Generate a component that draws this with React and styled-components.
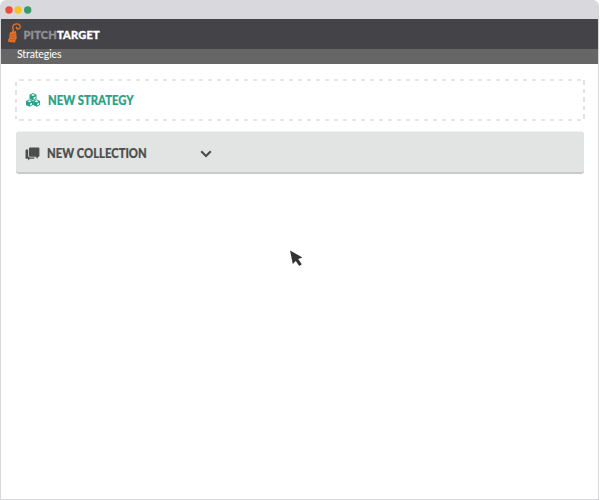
import React from 'react';
import styled, { createGlobalStyle } from 'styled-components';

const GlobalStyle = createGlobalStyle`
  * { box-sizing: border-box; }
  body { margin: 0; background: #fff; font-family: Lato, "Liberation Sans", sans-serif; }
`;

const Window = styled.div`
  position: relative;
  width: 599px;
  height: 500px;
  overflow: hidden;
  display: flex;
  flex-direction: column;
  border: 1px solid #d8d8dc;
  border-top: 0;
  border-radius: 6px 6px 0 0;
  background: #fff;
`;

const TitleBar = styled.div`
  display: flex;
  align-items: center;
  flex: 0 0 19px;
  padding-left: 4px;
  background: #d8d8dd;
`;

const Lights = styled.svg`
  display: block;
`;

const Header = styled.header`
  display: flex;
  align-items: center;
  flex: 0 0 30px;
  padding-left: 6px;
  background: #444348;
`;

const Wordmark = styled.div`
  margin: 1px 0 0 1.5px;
  font: 900 11px/14px Lato, sans-serif;
  letter-spacing: 0.22px;
  color: #fff;
  -webkit-text-stroke: 0.35px currentColor;
`;

const Muted = styled.span`
  color: #929294;
`;

const SubBar = styled.nav`
  flex: 0 0 15px;
  padding-left: 16px;
  background: #666;
  color: #fff;
  font-size: 10.5px;
  line-height: 11px;
  letter-spacing: -0.1px;
`;

const Main = styled.main`
  display: flex;
  flex-direction: column;
  gap: 10px;
  padding: 15px 14px 0 14px;
`;

const Row = styled.div`
  display: flex;
  align-items: center;
  font-weight: 900;
  font-size: 12.6px;
  line-height: 16px;
`;

const StrategyRow = styled(Row)`
  height: 42px;
  width: 570px;
  padding-left: 11px;
  color: #2aa287;
  background:
    repeating-linear-gradient(90deg, #e6e6e6 0 4.5px, transparent 4.5px 9px) 4px 0 / 563px 2px no-repeat,
    repeating-linear-gradient(90deg, #e6e6e6 0 4.5px, transparent 4.5px 9px) 4px 40px / 563px 2px no-repeat,
    repeating-linear-gradient(180deg, #e2e2e2 0 4.5px, transparent 4.5px 8.5px) 0 3px / 2px 37px no-repeat,
    repeating-linear-gradient(180deg, #e2e2e2 0 4.5px, transparent 4.5px 8.5px) 100% 1px / 2px 39px no-repeat;
`;

const CollectionRow = styled(Row)`
  height: 43px;
  width: 568px;
  margin-left: 1px;
  padding: 3px 0 0 9px;
  border-top: 1px solid #eff0ef;
  border-bottom: 2px solid #c9cbca;
  border-radius: 3px;
  background: #e2e4e3;
  color: #4c4e4d;
`;

const IconSlot = styled.span`
  display: flex;
  width: ${(p) => p.$width}px;
`;

const Label = styled.span`
  width: 153px;
  padding-top: 1px;
`;

const LabelText = styled.span`
  display: inline-block;
  transform: scaleX(0.895);
  transform-origin: 0 50%;
  -webkit-text-stroke: 0.2px currentColor;
`;

const Pointer = styled.svg`
  position: absolute;
  left: 288px;
  top: 250px;
`;

function Logo() {
  return (
    <svg width="15" height="22" viewBox="0 0 15 22">
      <path d="M2.8 9.6 8.9 8.1 9.8 15.6 8.6 17 8.2 19.6 1.3 19 1.1 16.4 2 15.4z" fill="#e87025" />
      <path d="M5 9.3C8 8.2 5.5 6.3 5.8 4.2 6 2.2 8 .9 9.9.9c2.1 0 3.4 1.4 3.3 2.8-.1 1.6-1.6 2.6-2.8 2.3-.9-.3-1.1-1-.8-1.7" fill="none" stroke="#e87025" strokeWidth="1.4" strokeLinecap="round" />
      <path d="M3.2 12.1l1.5-.9 1 1 1.6-1.2 1.3.8M2.8 14.7l1.6-1.2 1 1.2 1.7-1.2 1.3.5M2.5 17.4l1.6-1.2 1 1 1.6-1.2 1.4.3" fill="none" stroke="#8e5234" strokeWidth=".6" />
    </svg>
  );
}

function Cube({ x, y }) {
  return (
    <g transform={`translate(${x} ${y})`}>
      <path d="M0-3.8 3.5-2V2L0 3.8-3.5 2V-2z" fill="#2aa287" />
      <path d="M.6.7 2.5-.3V1.4L.6 2.4zM-1.9-1.8 0-2.8 1.9-1.8 0-.8z" fill="#fff" />
    </g>
  );
}

function Cubes() {
  return (
    <svg width="15" height="14" viewBox="0 0 15 14">
      <Cube x={7} y={3.8} />
      <Cube x={3.5} y={10} />
      <Cube x={10.6} y={10} />
    </svg>
  );
}

function Chats() {
  return (
    <svg width="15" height="14" viewBox="0 0 15 14" fill="#4c4e4d">
      <path d="M5 .5h8.4q1 0 1 1v7.2q0 1-1 1h-.6v2L10.4 9.7H5q-1 0-1-1V1.5q0-1 1-1z" />
      <path d="M3.2 2.6v6.2q0 1.7 1.7 1.7h4.6v.5q0 .8-.8.8H5L3.2 13.6v-1.8H1.3q-.8 0-.8-.8V3.7q0-1.1 1.1-1.1z" />
    </svg>
  );
}

export default function App() {
  return (
    <>
      <GlobalStyle />
      <Window>
        <TitleBar>
          <Lights width="28" height="8" viewBox="0 0 28 8">
            <circle cx="4" cy="4" r="3.7" fill="#eb4b3c" />
            <circle cx="13" cy="4" r="3.7" fill="#f2c61f" />
            <circle cx="22.7" cy="4" r="3.7" fill="#3b9b68" />
          </Lights>
        </TitleBar>
        <Header>
          <Logo />
          <Wordmark><Muted>PITCH</Muted>TARGET</Wordmark>
        </Header>
        <SubBar>Strategies</SubBar>
        <Main>
          <StrategyRow>
            <IconSlot $width={22}><Cubes /></IconSlot>
            <Label><LabelText>NEW STRATEGY</LabelText></Label>
          </StrategyRow>
          <CollectionRow>
            <IconSlot $width={22}><Chats /></IconSlot>
            <Label><LabelText>NEW COLLECTION</LabelText></Label>
            <svg width="12" height="8" viewBox="0 0 12 8" fill="none" stroke="#4c4e4d" strokeWidth="2.2">
              <path d="M1.2 1.2 6 6 10.8 1.2" />
            </svg>
          </CollectionRow>
        </Main>
        <Pointer width="15" height="17" viewBox="0 0 15 17">
          <path d="M1 .5 13.4 7.4 9.2 9.1 12.8 14.2 10.2 16 6.8 11 3.8 14z" fill="#333" />
        </Pointer>
      </Window>
    </>
  );
}
